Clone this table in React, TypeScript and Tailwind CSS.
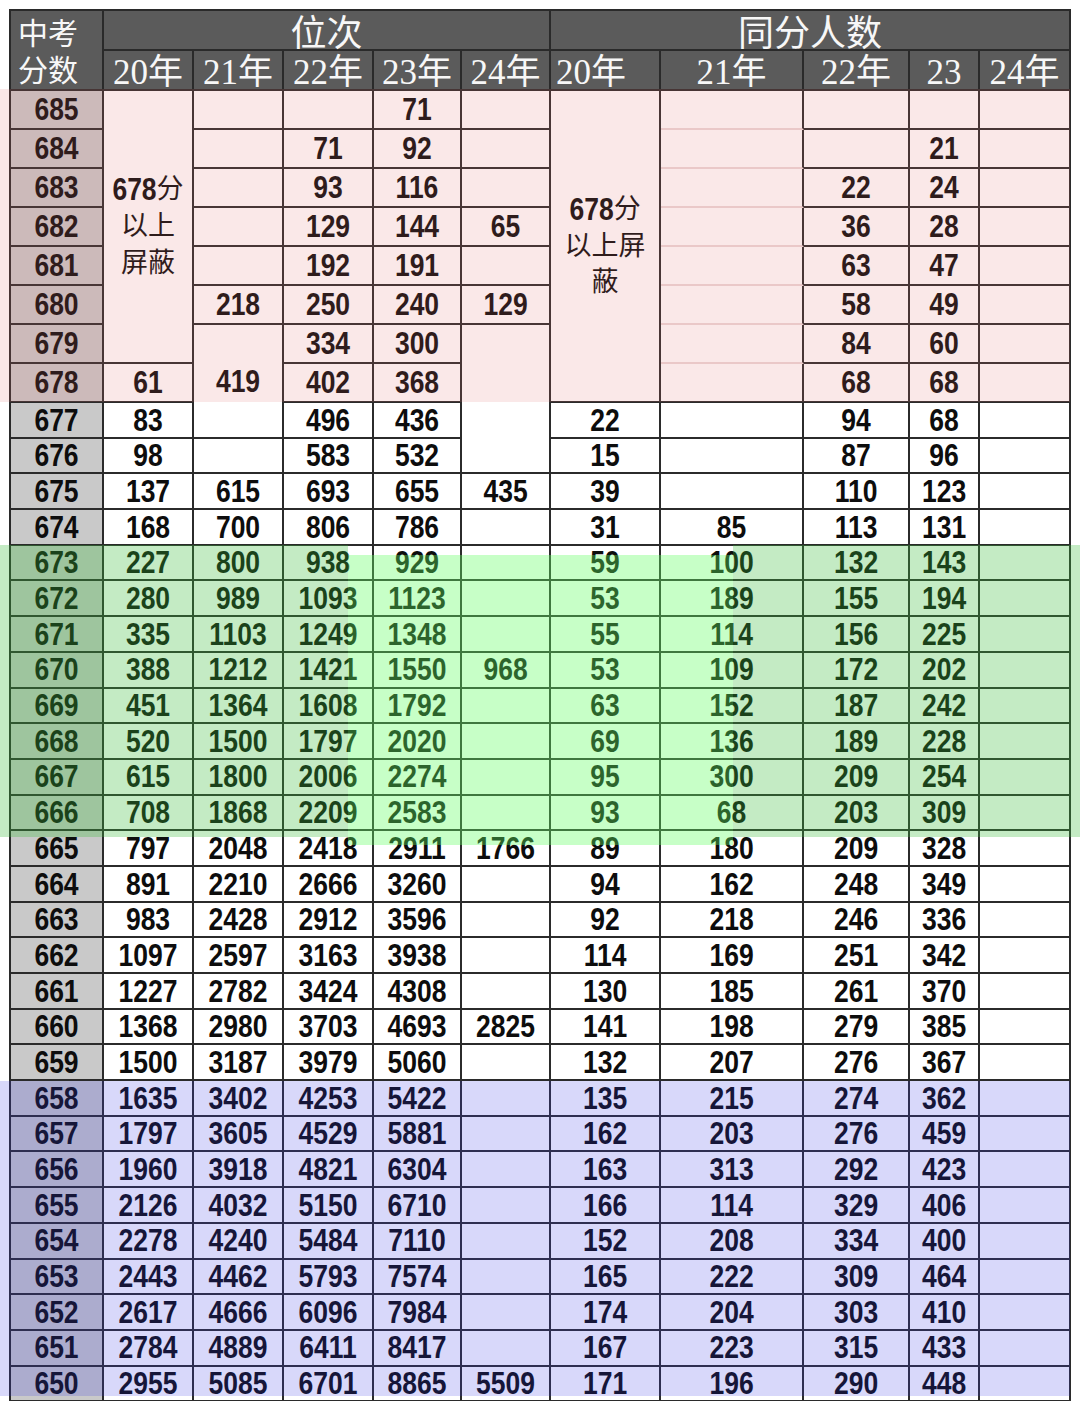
import React from "react";

type Cell = string | null | { v: React.ReactNode; rs?: number; cls?: string };

// cell borders: right + bottom only, table carries the top/left lines
const LINE = "border-r-2 border-b-2 border-[#2b2b2b]";
const FAINT = "border-r-2 border-b-2 border-r-[#2b2b2b] border-b-[#ecd9d9]";
const HEAD = "border-r-2 border-b-2 border-[#2a2a2a] bg-[#5b5b5b] p-0 font-normal text-[#f7f7f7] align-middle";

// the sheet uses a narrow bold face: stretch Arial-width digits vertically
const Num = ({ children }: { children: React.ReactNode }) => (
  <span className="inline-block scale-y-[1.18]">{children}</span>
);

const shieldA = (
  <div className="leading-[37px]">
    <Num>678</Num>
    <span className="font-normal text-[27px]">分</span>
    <br />
    <span className="font-normal text-[27px]">以上</span>
    <br />
    <span className="font-normal text-[27px]">屏蔽</span>
  </div>
);

const shieldB = (
  <div className="leading-[36.5px]">
    <Num>678</Num>
    <span className="font-normal text-[27px]">分</span>
    <br />
    <span className="font-normal text-[27px]">以上屏</span>
    <br />
    <span className="font-normal text-[27px]">蔽</span>
  </div>
);

const faint: Cell = { v: "", cls: FAINT };

// 685 - 678, rows of 39px
const topRows: Cell[][] = [
  ["685", { v: shieldA, rs: 7 }, "", "", "71", "", { v: shieldB, rs: 8 }, faint, "", "", ""],
  ["684", null, "", "71", "92", "", null, faint, "", "21", ""],
  ["683", null, "", "93", "116", "", null, faint, "22", "24", ""],
  ["682", null, "", "129", "144", "65", null, faint, "36", "28", ""],
  ["681", null, "", "192", "191", "", null, faint, "63", "47", ""],
  ["680", null, "218", "250", "240", "129", null, faint, "58", "49", ""],
  ["679", null, { v: <Num>419</Num>, rs: 3 }, "334", "300", { v: "", rs: 4 }, null, faint, "84", "60", ""],
  ["678", "61", null, "402", "368", null, null, "", "68", "68", ""],
];

// 677 - 650
const rows: Cell[][] = [
  ["677", "83", null, "496", "436", null, "22", "", "94", "68", ""],
  ["676", "98", "", "583", "532", null, "15", "", "87", "96", ""],
  ["675", "137", "615", "693", "655", "435", "39", "", "110", "123", ""],
  ["674", "168", "700", "806", "786", "", "31", "85", "113", "131", ""],
  ["673", "227", "800", "938", "929", "", "59", "100", "132", "143", ""],
  ["672", "280", "989", "1093", "1123", "", "53", "189", "155", "194", ""],
  ["671", "335", "1103", "1249", "1348", "", "55", "114", "156", "225", ""],
  ["670", "388", "1212", "1421", "1550", "968", "53", "109", "172", "202", ""],
  ["669", "451", "1364", "1608", "1792", "", "63", "152", "187", "242", ""],
  ["668", "520", "1500", "1797", "2020", "", "69", "136", "189", "228", ""],
  ["667", "615", "1800", "2006", "2274", "", "95", "300", "209", "254", ""],
  ["666", "708", "1868", "2209", "2583", "", "93", "68", "203", "309", ""],
  ["665", "797", "2048", "2418", "2911", "1766", "89", "180", "209", "328", ""],
  ["664", "891", "2210", "2666", "3260", "", "94", "162", "248", "349", ""],
  ["663", "983", "2428", "2912", "3596", "", "92", "218", "246", "336", ""],
  ["662", "1097", "2597", "3163", "3938", "", "114", "169", "251", "342", ""],
  ["661", "1227", "2782", "3424", "4308", "", "130", "185", "261", "370", ""],
  ["660", "1368", "2980", "3703", "4693", "2825", "141", "198", "279", "385", ""],
  ["659", "1500", "3187", "3979", "5060", "", "132", "207", "276", "367", ""],
  ["658", "1635", "3402", "4253", "5422", "", "135", "215", "274", "362", ""],
  ["657", "1797", "3605", "4529", "5881", "", "162", "203", "276", "459", ""],
  ["656", "1960", "3918", "4821", "6304", "", "163", "313", "292", "423", ""],
  ["655", "2126", "4032", "5150", "6710", "", "166", "114", "329", "406", ""],
  ["654", "2278", "4240", "5484", "7110", "", "152", "208", "334", "400", ""],
  ["653", "2443", "4462", "5793", "7574", "", "165", "222", "309", "464", ""],
  ["652", "2617", "4666", "6096", "7984", "", "174", "204", "303", "410", ""],
  ["651", "2784", "4889", "6411", "8417", "", "167", "223", "315", "433", ""],
  ["650", "2955", "5085", "6701", "8865", "5509", "171", "196", "290", "448", ""],
];

const colWidths = [93, 90, 90, 90, 88, 89, 110, 143, 106, 70, 91];

function Row({ cells, h }: { cells: Cell[]; h: string }) {
  return (
    <tr className={h}>
      {cells.map((c, i) => {
        if (c === null) return null;
        const bg = i === 0 ? "bg-[#c9c9c9]" : "bg-white";
        if (typeof c === "string") {
          return (
            <td key={i} className={`${LINE} ${bg} p-0 text-center align-middle`}>
              {c && <Num>{c}</Num>}
            </td>
          );
        }
        return (
          <td key={i} rowSpan={c.rs} className={`${c.cls ?? LINE} ${bg} p-0 text-center align-middle`}>
            {c.v}
          </td>
        );
      })}
    </tr>
  );
}

export default function App() {
  return (
    <div className="relative w-[1080px] h-[1401px] overflow-hidden bg-white">
      <table className="mt-[9px] ml-[9px] w-[1062px] table-fixed border-separate border-spacing-0 border-t-2 border-l-2 border-[#2a2a2a] font-['Liberation_Sans','Noto_Sans_CJK_SC',sans-serif] text-[26.5px] font-bold leading-none text-[#0d0d0d]">
        <colgroup>
          {colWidths.map((w, i) => (
            <col key={i} style={{ width: w }} />
          ))}
        </colgroup>
        <thead className="font-['Liberation_Serif','Noto_Sans_CJK_SC',serif]">
          <tr className="h-[40px]">
            <th rowSpan={2} className={`${HEAD} pl-[7px] pt-[3px] text-left text-[30px] leading-[37px] text-[#e2e2e2]`}>
              中考
              <br />
              分数
            </th>
            <th colSpan={5} className={`${HEAD} pt-[8px] text-center text-[36px] leading-[30px]`}>
              位次
            </th>
            <th colSpan={5} className={`${HEAD} pt-[8px] text-center text-[36px] leading-[30px]`}>
              同分人数
            </th>
          </tr>
          <tr className="h-[40px]">
            {["20年", "21年", "22年", "23年", "24年"].map((y) => (
              <th key={y} className={`${HEAD} pt-[6px] text-center text-[35px] leading-[32px]`}>
                {y}
              </th>
            ))}
            <th className={`${HEAD} pl-[5px] pt-[6px] text-left text-[35px] leading-[32px]`}>20年</th>
            <th className={`${HEAD} pt-[6px] text-center text-[35px] leading-[32px]`}>21年</th>
            <th className={`${HEAD} pt-[6px] text-center text-[35px] leading-[32px]`}>22年</th>
            <th className={`${HEAD} pt-[6px] text-center text-[35px] leading-[32px]`}>23</th>
            <th className={`${HEAD} pt-[6px] text-center text-[35px] leading-[32px]`}>24年</th>
          </tr>
        </thead>
        <tbody>
          {topRows.map((r, i) => (
            <Row key={`t${i}`} cells={r} h="h-[39px]" />
          ))}
          {rows.map((r, i) => (
            <Row key={`r${i}`} cells={r} h="h-[35.7px]" />
          ))}
        </tbody>
      </table>

      {/* highlight bands laid over the sheet */}
      <div className="pointer-events-none absolute left-0 top-[89px] h-[313px] w-[1070px] bg-[rgba(225,110,110,0.16)]" />
      <div className="pointer-events-none absolute left-0 top-[545px] h-[292px] w-[348px] bg-[rgba(60,190,60,0.3)]" />
      <div className="pointer-events-none absolute left-[348px] top-[555px] h-[290px] w-[385px] bg-[rgba(100,255,100,0.36)]" />
      <div className="pointer-events-none absolute left-[733px] top-[545px] h-[292px] w-[347px] bg-[rgba(60,190,60,0.3)]" />
      <div className="pointer-events-none absolute left-0 top-[1081px] h-[315px] w-[1070px] bg-[rgba(60,60,230,0.2)]" />
    </div>
  );
}
